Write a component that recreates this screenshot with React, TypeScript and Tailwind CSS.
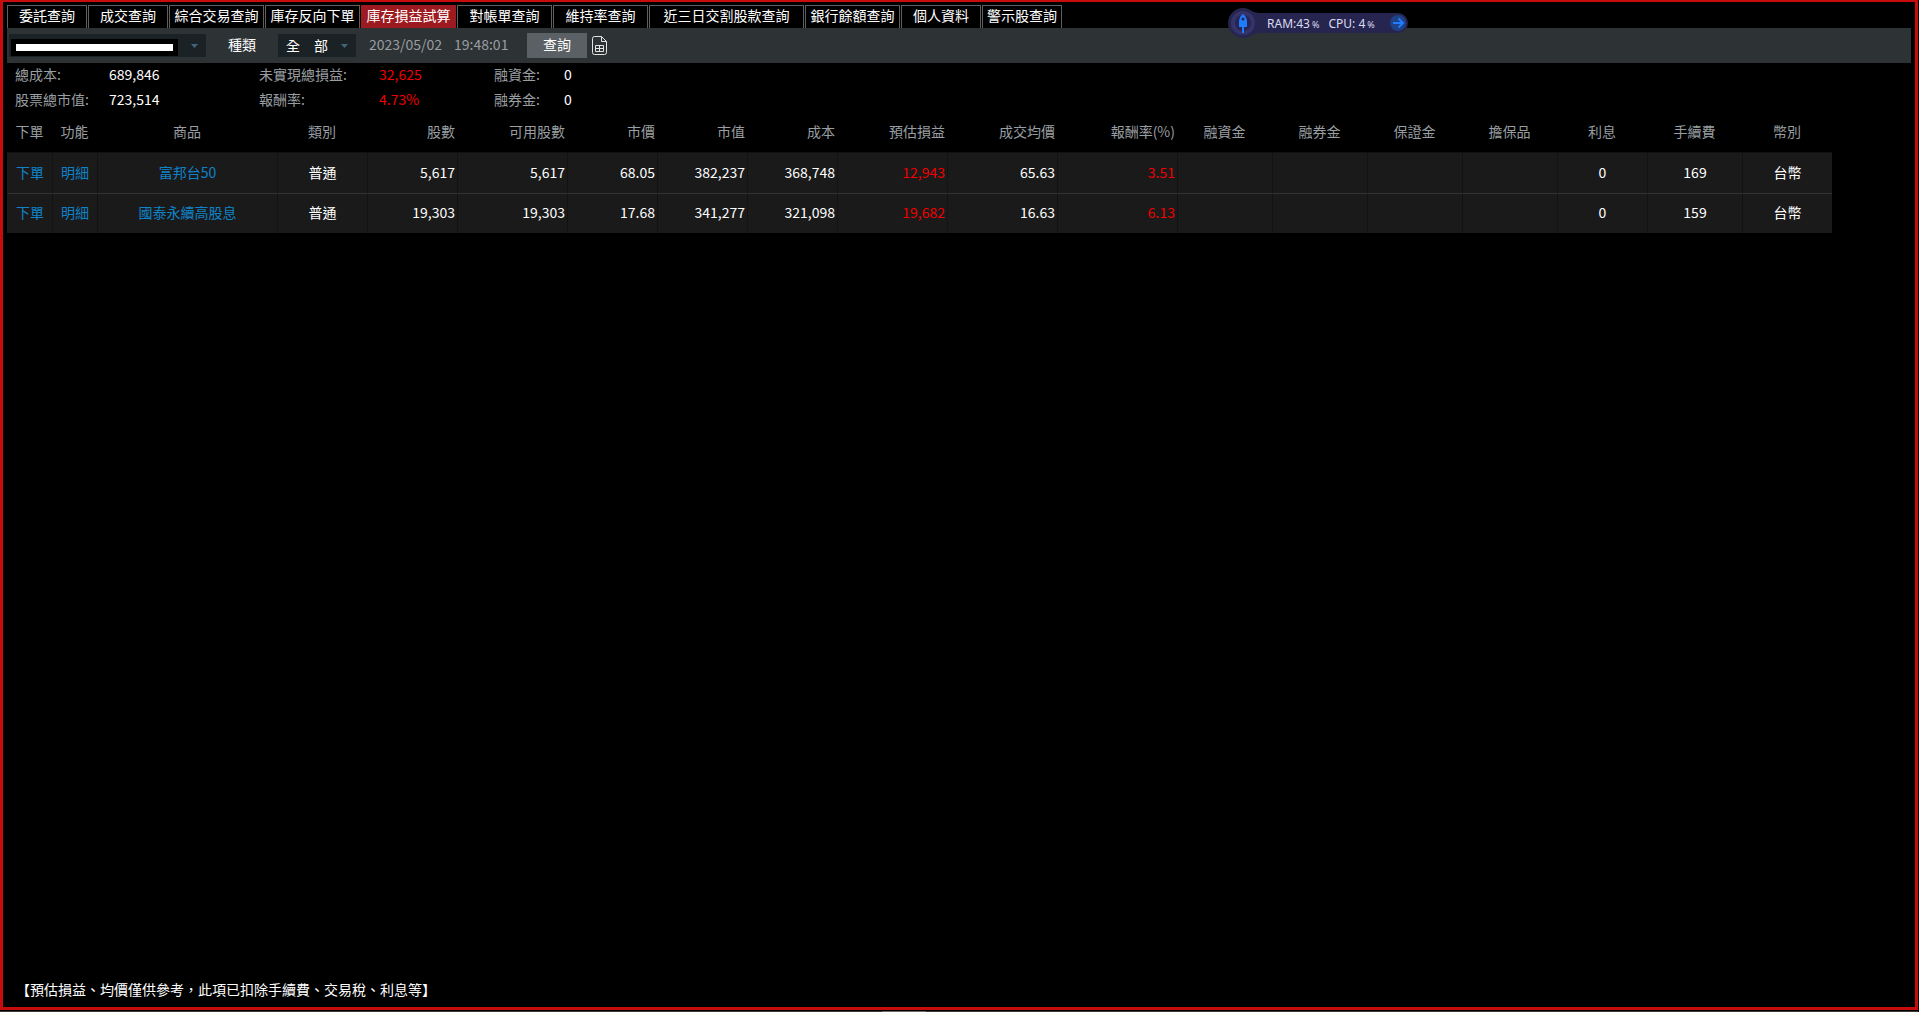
import { useState } from 'react';

const tabs = [
  { label: '委託查詢', width: 'w-[80px]' },
  { label: '成交查詢', width: 'w-[80px]' },
  { label: '綜合交易查詢', width: 'w-[95px]' },
  { label: '庫存反向下單', width: 'w-[95px]' },
  { label: '庫存損益試算', width: 'w-[95px]' },
  { label: '對帳單查詢', width: 'w-[95px]' },
  { label: '維持率查詢', width: 'w-[95px]' },
  { label: '近三日交割股款查詢', width: 'w-[155px]' },
  { label: '銀行餘額查詢', width: 'w-[95px]' },
  { label: '個人資料', width: 'w-[80px]' },
  { label: '警示股查詢', width: 'w-[80px]' },
];

interface Column {
  key: string;
  label: string;
  width: string;
  align: string;
  color?: string;
}

const columns: Column[] = [
  { key: 'order', label: '下單', width: 'w-[45px]', align: 'text-center' },
  { key: 'detail', label: '功能', width: 'w-[45px]', align: 'text-center' },
  { key: 'name', label: '商品', width: 'w-[180px]', align: 'text-center' },
  { key: 'type', label: '類別', width: 'w-[90px]', align: 'text-center' },
  { key: 'shares', label: '股數', width: 'w-[90px]', align: 'text-right' },
  { key: 'available', label: '可用股數', width: 'w-[110px]', align: 'text-right' },
  { key: 'price', label: '市價', width: 'w-[90px]', align: 'text-right' },
  { key: 'value', label: '市值', width: 'w-[90px]', align: 'text-right' },
  { key: 'cost', label: '成本', width: 'w-[90px]', align: 'text-right' },
  { key: 'profit', label: '預估損益', width: 'w-[110px]', align: 'text-right', color: 'text-[#f00000]' },
  { key: 'average', label: '成交均價', width: 'w-[110px]', align: 'text-right' },
  { key: 'rate', label: '報酬率(%)', width: 'w-[120px]', align: 'text-right', color: 'text-[#f00000]' },
  { key: 'margin', label: '融資金', width: 'w-[95px]', align: 'text-center' },
  { key: 'short', label: '融券金', width: 'w-[95px]', align: 'text-center' },
  { key: 'deposit', label: '保證金', width: 'w-[95px]', align: 'text-center' },
  { key: 'collateral', label: '擔保品', width: 'w-[95px]', align: 'text-center' },
  { key: 'interest', label: '利息', width: 'w-[90px]', align: 'text-center' },
  { key: 'fee', label: '手續費', width: 'w-[95px]', align: 'text-center' },
  { key: 'currency', label: '幣別', width: 'w-[90px]', align: 'text-center' },
];

const holdings: Record<string, string>[] = [
  {
    order: '下單', detail: '明細', name: '富邦台50', type: '普通', shares: '5,617', available: '5,617',
    price: '68.05', value: '382,237', cost: '368,748', profit: '12,943', average: '65.63', rate: '3.51',
    interest: '0', fee: '169', currency: '台幣',
  },
  {
    order: '下單', detail: '明細', name: '國泰永續高股息', type: '普通', shares: '19,303', available: '19,303',
    price: '17.68', value: '341,277', cost: '321,098', profit: '19,682', average: '16.63', rate: '6.13',
    interest: '0', fee: '159', currency: '台幣',
  },
];

const linkKeys = ['order', 'detail', 'name'];

const Caret = () => (
  <svg className="pointer-events-none absolute right-2 top-1/2 -translate-y-1/2" width="7" height="4" viewBox="0 0 7 4">
    <path d="M0 0h7L3.5 4z" fill="#41647a" />
  </svg>
);

const SystemMonitor = () => (
  <div className="absolute left-[1228px] top-2 flex h-[30px] w-[180px] items-center font-['Noto_Sans',sans-serif] text-xs text-[#dcdcf0]">
    <svg className="absolute inset-0" width="180" height="30" viewBox="0 0 180 30">
      <path d="M15 0c7 0 9 5 17 5h138a10 10 0 0 1 0 20H32c-8 0-10 5-17 5a15 15 0 0 1 0-30z" fill="#26254f" />
      <circle cx="15" cy="15" r="12" fill="#34346a" />
      <circle cx="15" cy="15" r="8" fill="#26254f" />
      <path d="M15 6c3 2 4 5 4 8v5h-3v6h-2v-6h-3v-5c0-3 1-6 4-8z" fill="#1f7bff" />
      <circle cx="15" cy="11" r="1.5" fill="#26254f" />
      <circle cx="170" cy="15" r="8" fill="#1f4186" />
      <path d="M165 15h9M170.500 10.500l4.500 4.500-4.500 4.500" fill="none" stroke="#1f7bff" strokeWidth="2" />
    </svg>
    <div className="relative ml-[39px] flex items-baseline pt-px">
      <span>RAM:43</span>
      <span className="ml-[2px] text-[9px]">%</span>
      <span className="ml-[9px]">CPU: 4</span>
      <span className="ml-[2px] text-[9px]">%</span>
    </div>
  </div>
);

const Summary = () => (
  <dl className="grid auto-rows-[25px] grid-cols-[94px_150px_120px_115px_70px_1fr] pl-2 text-sm leading-[22px]">
    <dt className="text-[#989ea1]">總成本:</dt>
    <dd>689,846</dd>
    <dt className="text-[#989ea1]">未實現總損益:</dt>
    <dd className="text-[#f00000]">32,625</dd>
    <dt className="text-[#989ea1]">融資金:</dt>
    <dd>0</dd>
    <dt className="text-[#989ea1]">股票總市值:</dt>
    <dd>723,514</dd>
    <dt className="text-[#989ea1]">報酬率:</dt>
    <dd className="text-[#f00000]">4.73%</dd>
    <dt className="text-[#989ea1]">融券金:</dt>
    <dd>0</dd>
  </dl>
);

const HoldingsTable = () => (
  <table className="w-[1825px] table-fixed border-separate border-spacing-0 text-sm">
    <thead>
      <tr className="h-10 text-[#989ea1]">
        {columns.map(col => (
          <th key={col.key} className={`border-b border-[#121212] px-[2px] pt-0 pb-1 font-normal ${col.width} ${col.align}`}>
            {col.label}
          </th>
        ))}
      </tr>
    </thead>
    <tbody className="bg-[#1a1a1a]">
      {holdings.map((row, i) => (
        <tr key={row.name} className="h-10">
          {columns.map(col => (
            <td
              key={col.key}
              className={`border-l border-l-[#131313] px-[2px] pt-0 pb-[3px] first:border-l-[#1a1a1a] ${i > 0 ? 'border-t border-t-[#333333]' : ''} ${col.align} ${col.color ?? 'text-white'}`}
            >
              {linkKeys.includes(col.key) ? (
                <a href="#" className="text-[#0f83c9]">{row[col.key]}</a>
              ) : (
                row[col.key]
              )}
            </td>
          ))}
        </tr>
      ))}
    </tbody>
  </table>
);

export default function App() {
  const [activeTab, setActiveTab] = useState('庫存損益試算');

  return (
    <div className="relative flex h-[calc(100vh-5px)] flex-col overflow-hidden bg-black pr-px font-['Noto_Sans_CJK_TC',sans-serif] text-white">
      <div className="flex flex-1 flex-col border-x-[3px] border-t-2 border-b-[3px] border-[#c80b0b] px-1 pt-[3px]">
        <nav className="flex gap-px text-sm">
          {tabs.map(tab => (
            <button
              key={tab.label}
              type="button"
              onClick={() => setActiveTab(tab.label)}
              className={`h-[23px] whitespace-nowrap border border-b-0 pb-1 leading-[18px] ${tab.width} ${activeTab === tab.label ? 'border-[#9c1a20] bg-[#9c1a20]' : 'border-[#5f5f5f] bg-black'}`}
            >
              {tab.label}
            </button>
          ))}
        </nav>

        <form className="flex h-[35px] items-center bg-[#2d3235] pl-0.5 text-sm" onSubmit={e => e.preventDefault()}>
          <div className="relative h-[23px] w-[197px]">
            <select aria-label="帳號" className="h-full w-full appearance-none bg-[#1b2226]">
              <option></option>
            </select>
            <div className="pointer-events-none absolute left-0.5 top-[5px] flex h-[17px] w-[167px] items-center bg-black px-[5px]">
              <div className="h-[7px] w-full bg-white" />
            </div>
            <Caret />
          </div>
          <label htmlFor="kind" className="ml-[22px] w-[50px] pb-[3px]">種類</label>
          <div className="relative h-[23px] w-[78px]">
            <select id="kind" className="h-full w-full appearance-none bg-[#1b2226] pl-2 leading-[23px]">
              <option>全　部</option>
            </select>
            <Caret />
          </div>
          <time className="ml-[13px] w-[85px] pb-[3px] text-[#989ea1]">2023/05/02</time>
          <time className="w-[73px] pb-[3px] text-[#989ea1]">19:48:01</time>
          <button type="submit" className="h-[25px] w-[60px] bg-[#5b6064] pb-[3px]">查詢</button>
          <button type="button" aria-label="匯出" className="ml-[5px]">
            <svg width="15" height="19" viewBox="0 0 15 19" fill="none" stroke="#e4e4e4">
              <path d="M2.500 .5h7l5 5v11a2 2 0 0 1-2 2h-10a2 2 0 0 1-2-2v-14a2 2 0 0 1 2-2z" />
              <path d="M9.500 .5v5h5" />
              <path d="M3.500 9.500h8v6h-8zM3.500 12.500h8M7.500 9.500v6" />
            </svg>
          </button>
        </form>

        <Summary />
        <HoldingsTable />

        <p className="mt-auto mb-2 pl-[9px] text-sm">【預估損益、均價僅供參考，此項已扣除手續費、交易稅、利息等】</p>
      </div>
      <div className="mt-px h-px bg-[#3a3a3a] pl-[882px]">
        <div className="h-px w-[44px] bg-[#6a6a6a]" />
      </div>
      <SystemMonitor />
    </div>
  );
}
